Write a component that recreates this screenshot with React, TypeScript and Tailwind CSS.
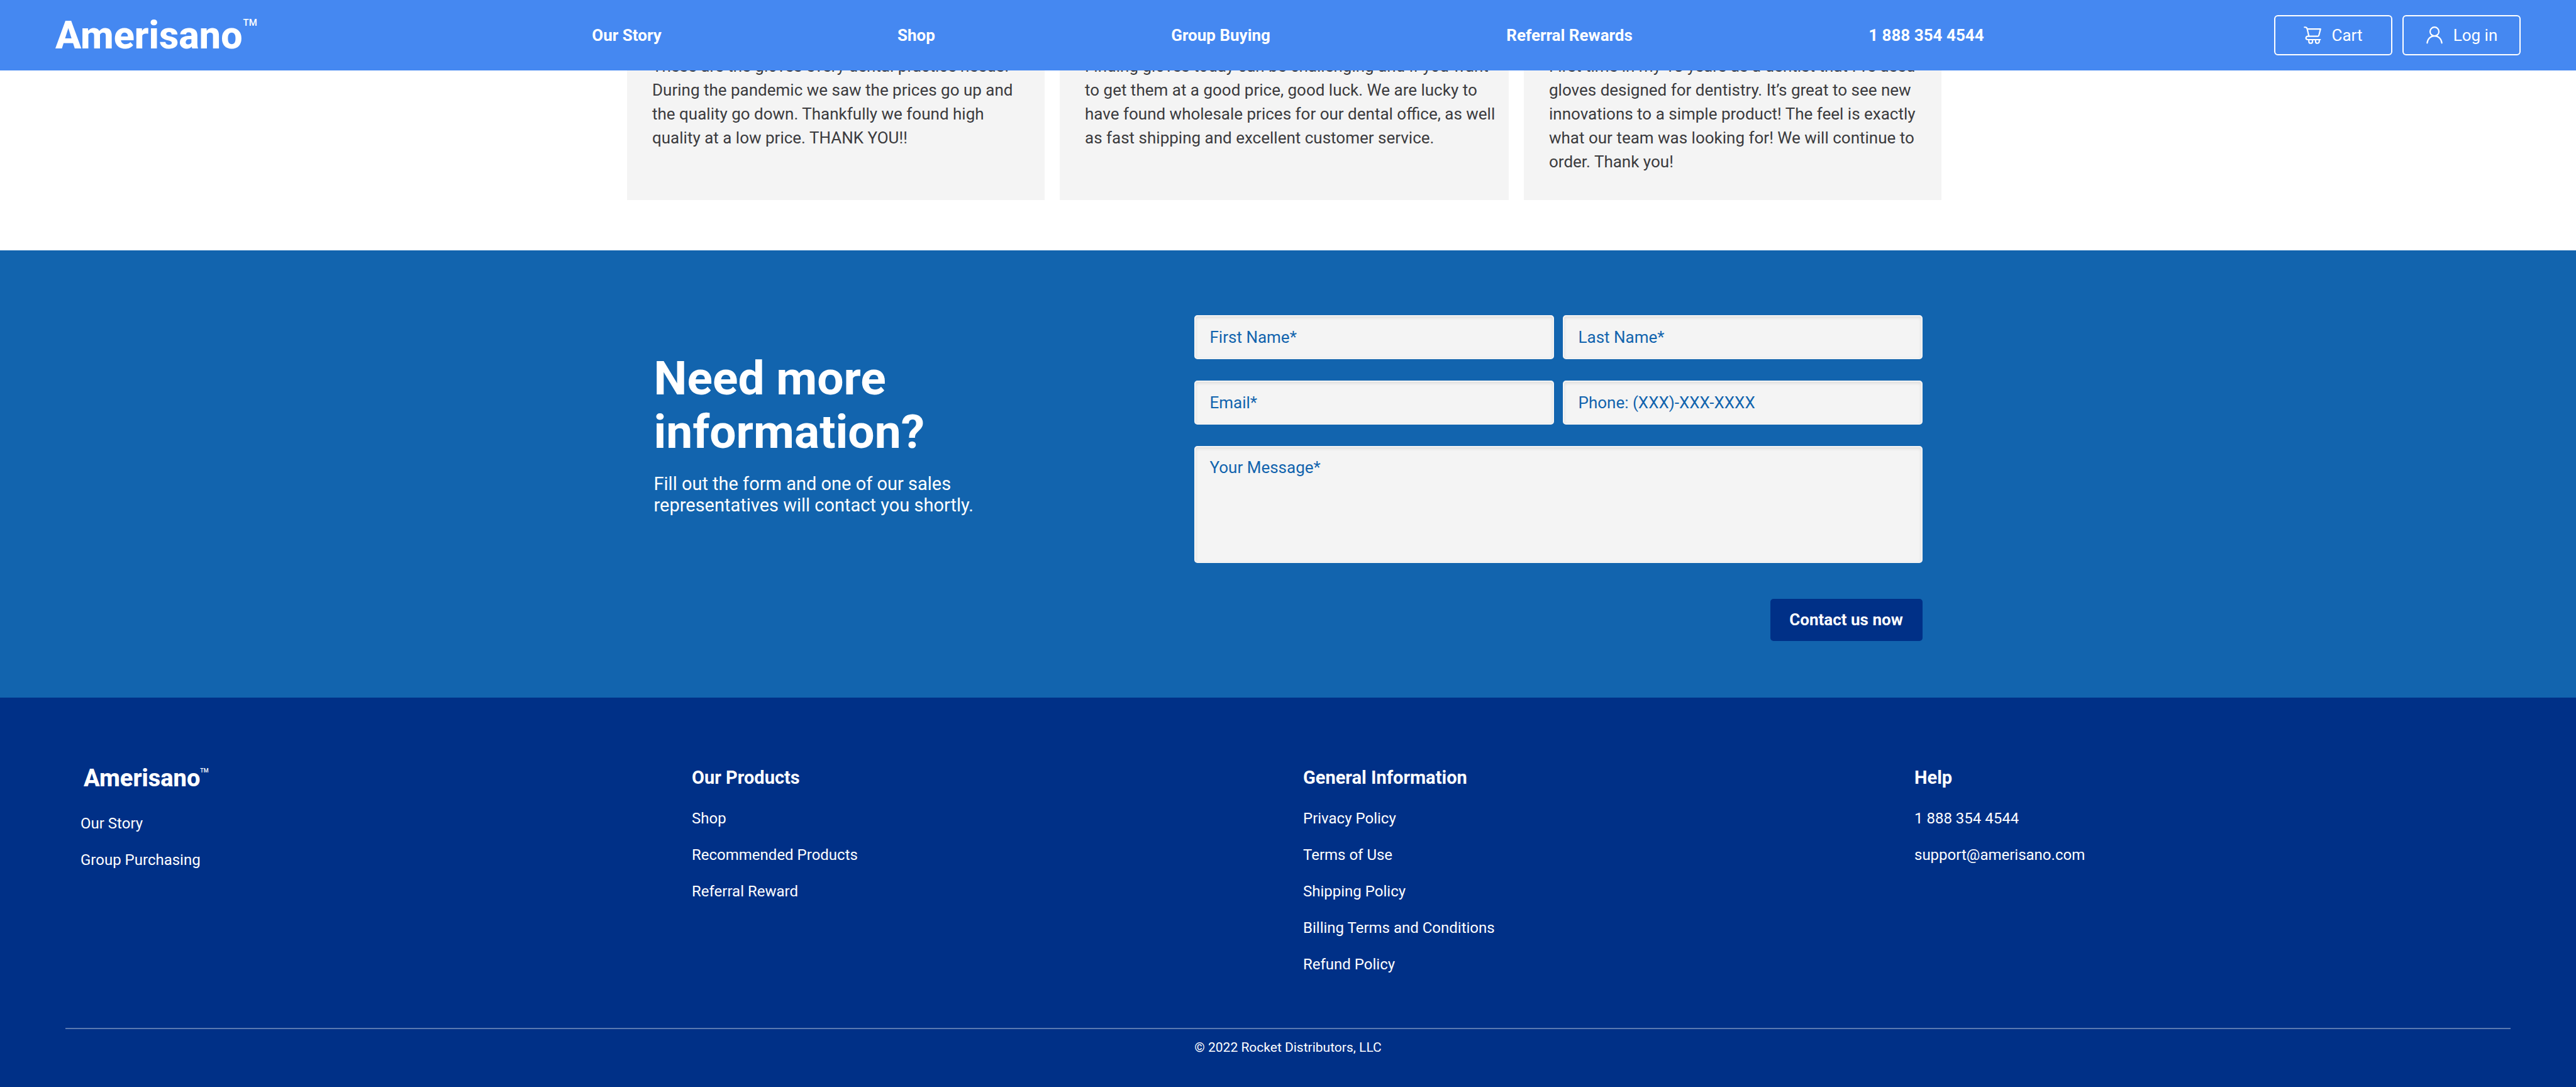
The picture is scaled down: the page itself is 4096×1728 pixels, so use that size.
import React from "react";

const navLinks = ["Our Story", "Shop", "Group Buying", "Referral Rewards", "1 888 354 4544"];

const testimonials = [
  {
    box: "w-[664px] pr-10",
    quote: "These are the gloves every dental practice needs! During the pandemic we saw the prices go up and the quality go down. Thankfully we found high quality at a low price. THANK YOU!!",
  },
  {
    box: "w-[714px] pr-3",
    quote: "Finding gloves today can be challenging and if you want to get them at a good price, good luck. We are lucky to have found wholesale prices for our dental office, as well as fast shipping and excellent customer service.",
  },
  {
    box: "w-[664px] pr-10",
    quote: "First time in my 18 years as a dentist that I’ve used gloves designed for dentistry. It’s great to see new innovations to a simple product! The feel is exactly what our team was looking for! We will continue to order. Thank you!",
  },
];

const footerColumns = [
  { title: "Our Products", links: ["Shop", "Recommended Products", "Referral Reward"] },
  {
    title: "General Information",
    links: ["Privacy Policy", "Terms of Use", "Shipping Policy", "Billing Terms and Conditions", "Refund Policy"],
  },
  { title: "Help", links: ["1 888 354 4544", "support@amerisano.com"] },
];

const fieldClass =
  "w-full rounded-[5px] border-2 border-[#f4f4f4] bg-[#f4f4f4] px-[23px] text-[26px] text-[#1264ae] shadow-[inset_0_2px_5px_rgba(0,0,0,0.1)] outline-none placeholder:text-[#1264ae] placeholder:opacity-100";

const headerButtonClass =
  "flex h-16 w-[188px] items-center justify-center gap-4 rounded-md border-2 border-white";

function CartIcon() {
  return (
    <svg className="h-7 w-7" viewBox="0 0 34 34" fill="none" stroke="currentColor" strokeWidth="2.6" strokeLinecap="round" strokeLinejoin="round" aria-hidden="true">
      <path d="M1.500 1.500h1.500c2 0 3.200 1 3.700 3L10 18.500" />
      <path d="M7 5H32.500L29.300 17.200q-.5 1.800-2.300 1.800H8c-4.800 0-4.800 6.500 0 6.500H32" />
      <path d="M10 25.500v3.500a3.500 3.500 0 0 0 7 0v-3.500M23 25.500v3.500a3.500 3.500 0 0 0 7 0v-3.500" />
    </svg>
  );
}

function UserIcon() {
  return (
    <svg className="h-7 w-7" viewBox="0 0 34 36" fill="none" stroke="currentColor" strokeWidth="2.8" strokeLinecap="round" aria-hidden="true">
      <circle cx="17" cy="10.500" r="9" />
      <path d="M2 34C3 25.500 9 19.500 17 19.500S31 25.500 32 34" />
    </svg>
  );
}

export default function App() {
  return (
    <div className="min-h-screen bg-white font-['Roboto',sans-serif] text-white">
      <header className="sticky top-0 z-10 flex h-28 items-center bg-[#4588f1]">
        <div className="w-[18.4%] pl-[88px]">
          <a href="#home" className="inline-flex items-start text-[61px] leading-[64px] font-extrabold">
            Amerisano<span className="pt-1 pl-px text-[15px] leading-4 font-medium">TM</span>
          </a>
        </div>
        <nav className="flex flex-1 justify-around text-[26px] leading-8 font-bold">
          {navLinks.map((label) => (
            <a key={label} href="#nav">{label}</a>
          ))}
        </nav>
        <div className="flex w-[18.4%] justify-end gap-4 pr-[88px] text-[26px] leading-8">
          <button type="button" className={headerButtonClass}>
            <CartIcon />
            Cart
          </button>
          <button type="button" className={headerButtonClass}>
            <UserIcon />
            Log in
          </button>
        </div>
      </header>

      <main>
        <section className="-mt-12 flex justify-center gap-6 pr-3 pb-20" aria-label="Testimonials">
          {testimonials.map((t) => (
            <blockquote key={t.quote} className={`${t.box} bg-[#f4f4f4] pt-[22px] pb-[42px] pl-10 text-[26px] leading-[38px] text-[#3b3b3e]`}>
              {t.quote}
            </blockquote>
          ))}
        </section>

        <section className="flex justify-center bg-[#1264ae] pt-[103px] pb-[90px]">
          <div className="w-[859px] pt-[58px]">
            <h2 className="w-[500px] text-[75px] leading-[85px] font-bold">Need more information?</h2>
            <p className="w-[540px] pt-[23px] text-[29px] leading-[34px]">
              Fill out the form and one of our sales representatives will contact you shortly.
            </p>
          </div>
          <form className="flex w-[1158px] flex-col gap-[34px]" onSubmit={(e) => e.preventDefault()}>
            <div className="grid grid-cols-2 gap-x-[14px] gap-y-[34px]">
              <input className={`${fieldClass} h-[70px]`} aria-label="First Name" placeholder="First Name*" />
              <input className={`${fieldClass} h-[70px]`} aria-label="Last Name" placeholder="Last Name*" />
              <input className={`${fieldClass} h-[70px]`} type="email" aria-label="Email" placeholder="Email*" />
              <input className={`${fieldClass} h-[70px]`} type="tel" aria-label="Phone" placeholder="Phone: (XXX)-XXX-XXXX" />
            </div>
            <textarea className={`${fieldClass} block h-[186px] resize-none py-4 leading-8`} aria-label="Your Message" placeholder="Your Message*" />
            <button type="submit" className="mt-[23px] h-[67px] w-[242px] self-end rounded-[5px] bg-[#003087] text-[26px] font-bold">
              Contact us now
            </button>
          </form>
        </section>
      </main>

      <footer className="bg-[#003087] px-[104px] pt-[108px]">
        <div className="grid min-h-[417px] grid-cols-4 text-2xl leading-7">
          <div className="pl-6">
            <a href="#home" className="inline-flex items-start pl-[5px] text-[38px] leading-10 font-extrabold">
              Amerisano<span className="text-[9px] leading-4 font-medium">TM</span>
            </a>
            <ul className="flex flex-col gap-[30px] pt-[38px]">
              <li><a href="#our-story">Our Story</a></li>
              <li><a href="#group-purchasing">Group Purchasing</a></li>
            </ul>
          </div>
          {footerColumns.map((col) => (
            <div key={col.title} className="pl-6">
              <h3 className="text-[29px] leading-[38px] font-bold">{col.title}</h3>
              <ul className="flex flex-col gap-[30px] pt-8">
                {col.links.map((label) => (
                  <li key={label}><a href="#footer">{label}</a></li>
                ))}
              </ul>
            </div>
          ))}
        </div>
        <p className="border-t-2 border-[#5978b0] pt-[15px] pb-[49px] text-center text-[21px] leading-7">© 2022 Rocket Distributors, LLC</p>
      </footer>
    </div>
  );
}
